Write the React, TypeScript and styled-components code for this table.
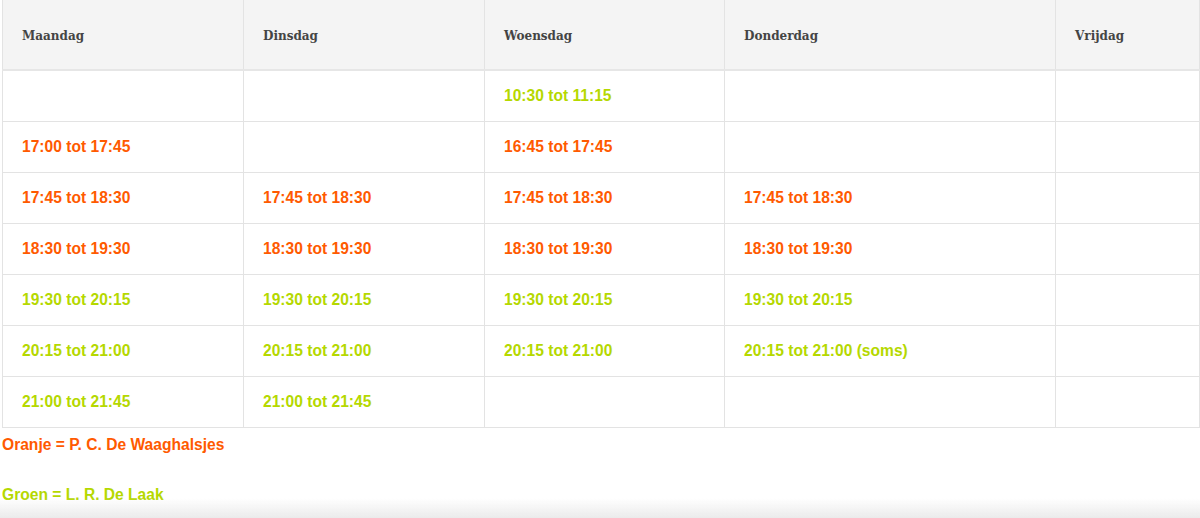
import styled, { createGlobalStyle } from "styled-components";

const GlobalStyle = createGlobalStyle`
  html, body {
    margin: 0;
    padding: 0;
    background: #fff;
  }
  body {
    font-family: "Liberation Sans", Arial, sans-serif;
  }
`;

const orange = "#ff5a00";
const green = "#b5d800";

type Slot = { text: string; club: "o" | "g" } | null;

const days = [
  { name: "Maandag", width: 241 },
  { name: "Dinsdag", width: 241 },
  { name: "Woensdag", width: 240 },
  { name: "Donderdag", width: 331 },
  { name: "Vrijdag", width: 144 },
];

const o = (text: string): Slot => ({ text, club: "o" });
const g = (text: string): Slot => ({ text, club: "g" });

const rows: Slot[][] = [
  [null, null, g("10:30 tot 11:15"), null, null],
  [o("17:00 tot 17:45"), null, o("16:45 tot 17:45"), null, null],
  [o("17:45 tot 18:30"), o("17:45 tot 18:30"), o("17:45 tot 18:30"), o("17:45 tot 18:30"), null],
  [o("18:30 tot 19:30"), o("18:30 tot 19:30"), o("18:30 tot 19:30"), o("18:30 tot 19:30"), null],
  [g("19:30 tot 20:15"), g("19:30 tot 20:15"), g("19:30 tot 20:15"), g("19:30 tot 20:15"), null],
  [g("20:15 tot 21:00"), g("20:15 tot 21:00"), g("20:15 tot 21:00"), g("20:15 tot 21:00 (soms)"), null],
  [g("21:00 tot 21:45"), g("21:00 tot 21:45"), null, null, null],
];

const Page = styled.div`
  padding: 0 1px 0 2px;
`;

const Schedule = styled.table`
  width: 1197px;
  border-collapse: collapse;
  table-layout: fixed;
`;

const HeadCell = styled.th`
  height: 67px;
  padding: 2px 19px 0;
  background: #f4f4f4;
  border-left: 1px solid #e3e3e3;
  border-right: 1px solid #e3e3e3;
  border-bottom: 2px solid #e6e6e6;
  text-align: left;
  font-family: "DejaVu Serif", "Liberation Serif", serif;
  font-size: 12px;
  font-weight: bold;
  color: #444;
`;

const Cell = styled.td<{ $club?: "o" | "g" }>`
  height: 50px;
  padding: 0 19px;
  border: 1px solid #e3e3e3;
  font-size: 15.6px;
  font-weight: bold;
  color: ${({ $club }) => ($club === "o" ? orange : green)};
  white-space: nowrap;
`;

const Legend = styled.div`
  display: flex;
  flex-direction: column;
  gap: 30px;
  padding-top: 7px;
`;

const Note = styled.p<{ $color: string }>`
  margin: 0;
  line-height: 20px;
  font-size: 15.6px;
  font-weight: bold;
  color: ${({ $color }) => $color};
`;

const BottomFade = styled.div`
  position: fixed;
  left: 0;
  right: 0;
  bottom: 0;
  height: 20px;
  pointer-events: none;
  background: linear-gradient(to bottom, rgba(235, 235, 235, 0), #ebebeb);
`;

export default function App() {
  return (
    <Page>
      <GlobalStyle />
      <Schedule>
        <colgroup>
          {days.map((d) => (
            <col key={d.name} style={{ width: d.width }} />
          ))}
        </colgroup>
        <thead>
          <tr>
            {days.map((d) => (
              <HeadCell key={d.name}>{d.name}</HeadCell>
            ))}
          </tr>
        </thead>
        <tbody>
          {rows.map((row, i) => (
            <tr key={i}>
              {row.map((slot, j) => (
                <Cell key={j} $club={slot?.club}>
                  {slot?.text}
                </Cell>
              ))}
            </tr>
          ))}
        </tbody>
      </Schedule>
      <Legend>
        <Note $color={orange}>Oranje = P. C. De Waaghalsjes</Note>
        <Note $color={green}>Groen = L. R. De Laak</Note>
      </Legend>
      <BottomFade />
    </Page>
  );
}
